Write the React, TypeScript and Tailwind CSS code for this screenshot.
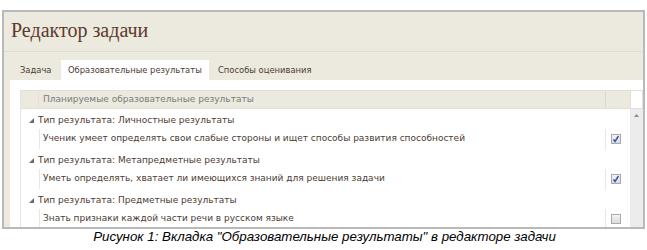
import React from "react";

const rows = [
  {
    group: "Тип результата: Личностные результаты",
    item: "Ученик умеет определять свои слабые стороны и ищет способы развития способностей",
    checked: true,
  },
  {
    group: "Тип результата: Метапредметные результаты",
    item: "Уметь определять, хватает ли имеющихся знаний для решения задачи",
    checked: true,
  },
  {
    group: "Тип результата: Предметные результаты",
    item: "Знать признаки каждой части речи в русском языке",
    checked: false,
  },
];

function Arrow() {
  return (
    <svg width="5" height="5" viewBox="0 0 5 5" className="mr-[4px]">
      <polygon points="5,0 5,5 0,5" fill="#6b6b6b" />
    </svg>
  );
}

function Checkbox({ checked }: { checked: boolean }) {
  return (
    <div className="w-[10px] h-[10px] border border-[#a9a9a9] bg-gradient-to-b from-[#f4f4f4] to-[#d8dbe2] flex items-center justify-center">
      {checked && (
        <svg width="8" height="8" viewBox="0 0 8 8">
          <path d="M1.5 4.5 L3 6.5 L6.5 1" stroke="#2f4fb0" strokeWidth="1.4" fill="none" />
        </svg>
      )}
    </div>
  );
}

export default function App() {
  return (
    <div className="w-[647px] h-[250px] bg-white pt-[10px] pl-[2px] overflow-hidden">
      <div className="w-[643px] h-[219px] border-2 border-[#b9b9b9] bg-[#ece9df] flex flex-col overflow-hidden">
        {/* title */}
        <div className="h-[40px] border-b border-[#e0dccf] pl-[7px] flex items-center">
          <div className="text-[20px] text-[#5b3b2a] font-['Liberation_Serif',serif] leading-none pb-[3px]">
            Редактор задачи
          </div>
        </div>

        {/* tabs */}
        <div className="h-[28px] flex items-end pl-[9px] text-[8.4px] text-[#4d3b33] font-['DejaVu_Sans',sans-serif]">
          <div className="h-[20px] pl-[7px] w-[48px] flex items-center">Задача</div>
          <div className="h-[20px] pl-[7px] w-[148px] flex items-center bg-white whitespace-nowrap">
            Образовательные результаты
          </div>
          <div className="h-[20px] pl-[9px] flex items-center">Способы оценивания</div>
        </div>

        {/* content */}
        <div className="flex-1 ml-[6px] bg-white pt-[10px] pl-[10px] overflow-hidden font-['DejaVu_Sans',sans-serif] text-[9px]">
          <div className="flex border-l border-[#e3e3e3]">
            <div className="flex-1">
              {/* header */}
              <div className="h-[19px] flex bg-[#ece9df] border-t border-b border-[#e3e0d6] text-[#7b7b7b]">
                <div className="w-[18px] border-r border-[#e3e0d6]" />
                <div className="flex-1 pl-[4px] flex items-center">Планируемые образовательные результаты</div>
                <div className="w-[25px] border-l border-[#dcd9cf]" />
              </div>
              {rows.map((r) => (
                <div key={r.group} className="text-[#4d3b33]">
                  <div className="h-[20px] flex items-center pl-[8px] pt-[3px]">
                    <Arrow />
                    {r.group}
                  </div>
                  <div className="h-[20px] flex items-stretch">
                    <div className="w-[18px]" />
                    <div className="flex-1 border-l border-[#e6e6e6] pl-[3px] flex items-center">{r.item}</div>
                    <div className="w-[25px] border-l border-[#e6e6e6] flex items-center pl-[5px]">
                      <Checkbox checked={r.checked} />
                    </div>
                  </div>
                </div>
              ))}
            </div>
            {/* scrollbar */}
            <div className="w-[13px] flex flex-col">
              <div className="h-[19px] border border-[#e0e0e0] bg-white" />
              <div className="flex-1 bg-[#ececec] flex justify-center pt-[5px]">
                <svg width="5" height="3" viewBox="0 0 5 3">
                  <polygon points="2.5,0 5,3 0,3" fill="#8a8a8a" />
                </svg>
              </div>
            </div>
          </div>
        </div>
      </div>
      <div className="text-center text-[13.3px] italic text-black font-['Liberation_Sans',sans-serif] leading-none mt-[1px]">
        Рисунок 1: Вкладка "Образовательные результаты" в редакторе задачи
      </div>
    </div>
  );
}
